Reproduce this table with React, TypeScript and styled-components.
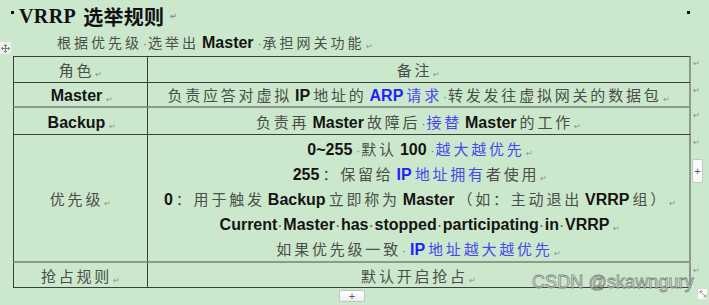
import React from "react";
import styled, { createGlobalStyle } from "styled-components";

const GlobalStyle = createGlobalStyle`
  html, body {
    margin: 0;
    padding: 0;
  }
  body {
    background: #cce8cc;
    font-family: "Liberation Sans", "Noto Sans CJK SC", sans-serif;
  }
`;

const DARK = "#3b403b";
const SOFT = "#8c9a8c";

const Page = styled.div`
  position: relative;
  width: 709px;
  height: 305px;
  overflow: hidden;
  background: #cce8cc;
`;

const Heading = styled.div`
  display: flex;
  align-items: center;
  justify-content: space-between;
  height: 32px;
  padding: 0 19px 0 11px;
  box-sizing: border-box;
`;

const Title = styled.h1`
  margin: 0;
  display: flex;
  align-items: center;
  gap: 5px;
  font: 700 20px "Liberation Serif", "Noto Sans CJK SC", serif;
  color: #111;
  letter-spacing: 0.4px;
`;

const Bullet = styled.span<{ $size: number }>`
  width: ${(p) => p.$size}px;
  height: ${(p) => p.$size}px;
  background: #111;
  margin-bottom: 8px;
`;

const Cjk = styled.span`
  font-family: "Noto Sans CJK SC", sans-serif;
  margin-left: 2px;
  letter-spacing: 0.3px;
`;

const Intro = styled.p`
  margin: 0;
  height: 24px;
  line-height: 22px;
  padding-left: 57px;
  font-size: 14px;
  letter-spacing: 3px;
  color: #4a4e4a;
`;

const Mark = styled.span`
  font-size: 8px;
  color: #8a8f8a;
  letter-spacing: 0;
  margin-left: 1px;
  vertical-align: -1px;
`;

const Dot = styled.span`
  color: #6c706c;
  letter-spacing: 0;
  font-size: 12px;
  padding: 0 1px;
`;

const B = styled.b<{ $blue?: boolean }>`
  font-family: "Liberation Sans", sans-serif;
  font-weight: 700;
  font-size: 16px;
  letter-spacing: 0;
  color: ${(p) => (p.$blue ? "#1f1fff" : "#141414")};
  padding: 0 3px;
`;

const Blue = styled.span`
  color: #4848ee;
`;

const Grid = styled.div`
  display: grid;
  grid-template-columns: 135px 543px 19px;
  margin-left: 13px;
`;

const Cell = styled.div<{ $h: number; $top?: boolean; $soft?: boolean; $multi?: boolean }>`
  box-sizing: border-box;
  height: ${(p) => p.$h}px;
  padding-top: ${(p) => (p.$multi ? 3 : 7)}px;
  border-top: ${(p) => (p.$top ? `1px solid ${DARK}` : "none")};
  border-bottom: ${(p) => (p.$soft ? `2px solid ${SOFT}` : `1px solid ${DARK}`)};
  display: flex;
  flex-direction: column;
  align-items: center;
  justify-content: center;
  font-size: 15px;
  line-height: 20px;
  letter-spacing: 2.8px;
  color: #4a4e4a;
  white-space: nowrap;
`;

const KeyCell = styled(Cell)`
  border-left: 1px solid ${DARK};
  border-right: 1px solid ${DARK};
`;

const NoteCell = styled(Cell)`
  border-right: 2px solid ${SOFT};
`;

const Line = styled.div`
  height: 25px;
  line-height: 25px;
`;

const EndCell = styled.div<{ $h: number }>`
  height: ${(p) => p.$h}px;
  padding: 3px 0 0 1px;
  box-sizing: border-box;
  display: flex;
  flex-direction: column;
  align-items: flex-start;
  gap: 12px;
`;

const EndMark = styled.span`
  font-size: 8px;
  color: #8a8f8a;
  margin-left: 1px;
`;

const SideAdd = styled.div`
  width: 11px;
  height: 24px;
  box-sizing: border-box;
  background: #fafafa;
  border: 1px solid #c4c8c4;
  border-radius: 2px;
  display: flex;
  align-items: center;
  justify-content: center;
  font-size: 11px;
  color: #555;
`;

const Footer = styled.div`
  width: 678px;
  margin-left: 13px;
  display: flex;
  justify-content: center;
  padding-top: 2px;
`;

const BottomAdd = styled.div`
  width: 26px;
  height: 12px;
  box-sizing: border-box;
  background: linear-gradient(#ffffff, #eeeeee);
  border: 1px solid #c0c4c0;
  border-radius: 2px;
  display: flex;
  align-items: center;
  justify-content: center;
  font-size: 11px;
  line-height: 1;
  color: #555;
`;

const MoveHandle = styled.div`
  position: absolute;
  left: 0;
  top: 42px;
  width: 11px;
  height: 12px;
  background: #eef0ee;
  display: flex;
  align-items: center;
  justify-content: center;
`;

const ResizeHandle = styled.div`
  position: absolute;
  left: 697px;
  top: 288px;
  width: 11px;
  height: 12px;
  background: #fbfbfb;
  border: 1px solid #d8dcd8;
  box-sizing: border-box;
  display: flex;
  align-items: center;
  justify-content: center;
`;

const Watermark = styled.div`
  position: absolute;
  left: 532px;
  top: 272px;
  font: 400 18px "Liberation Sans", sans-serif;
  color: rgba(255, 255, 255, 0.6);
  -webkit-text-stroke: 0.8px #80857f;
  letter-spacing: 0.1px;
  pointer-events: none;
`;

type Row = {
  key: React.ReactNode;
  note: React.ReactNode;
  h: number;
  soft?: boolean;
  multi?: boolean;
};

const rows: Row[] = [
  {
    key: (
      <>
        角色<Mark>↵</Mark>
      </>
    ),
    note: (
      <span>
        备注<Mark>↵</Mark>
      </span>
    ),
    h: 27,
  },
  {
    key: (
      <>
        <B>Master</B>
        <Mark>↵</Mark>
      </>
    ),
    note: (
      <span>
        负责应答对虚拟<B>IP</B>地址的<B $blue>ARP</B>
        <Blue>请求</Blue>
        <Dot>·</Dot>转发发往虚拟网关的数据包<Mark>↵</Mark>
      </span>
    ),
    h: 25,
    soft: true,
  },
  {
    key: (
      <>
        <B>Backup</B>
        <Mark>↵</Mark>
      </>
    ),
    note: (
      <span>
        负责再<B>Master</B>故障后<Dot>·</Dot>
        <Blue>接替</Blue>
        <B>Master</B>的工作<Mark>↵</Mark>
      </span>
    ),
    h: 27,
  },
  {
    key: (
      <>
        优先级<Mark>↵</Mark>
      </>
    ),
    note: (
      <>
        <Line>
          <B>0~255</B>
          <Dot>·</Dot>默认<B>100</B>
          <Dot>·</Dot>
          <Blue>越大越优先</Blue>
          <Mark>↵</Mark>
        </Line>
        <Line>
          <B>255</B>：保留给<B $blue>IP</B>
          <Blue>地址拥有</Blue>者使用<Mark>↵</Mark>
        </Line>
        <Line>
          <B>0</B>：用于触发<B>Backup</B>立即称为<B>Master</B>（如：主动退出<B>VRRP</B>组）
          <Mark>↵</Mark>
        </Line>
        <Line>
          <B>
            Current<Dot>·</Dot>Master<Dot>·</Dot>has<Dot>·</Dot>stopped<Dot>·</Dot>
            participating<Dot>·</Dot>in<Dot>·</Dot>VRRP
          </B>
          <Mark>↵</Mark>
        </Line>
        <Line>
          如果优先级一致<Dot>·</Dot>
          <B $blue>IP</B>
          <Blue>地址越大越优先</Blue>
          <Mark>↵</Mark>
        </Line>
      </>
    ),
    h: 128,
    soft: true,
    multi: true,
  },
  {
    key: (
      <>
        抢占规则<Mark>↵</Mark>
      </>
    ),
    note: (
      <span>
        默认开启抢占<Mark>↵</Mark>
      </span>
    ),
    h: 25,
  },
];

const MoveIcon = () => (
  <svg width="9" height="9" viewBox="0 0 9 9" fill="none" stroke="#7a7f7a" strokeWidth="1">
    <path d="M4.5 0.5v8M0.5 4.5h8" />
    <path d="M3 2l1.5-1.5L6 2M3 7l1.5 1.5L6 7M2 3L0.5 4.5 2 6M7 3l1.5 1.5L7 6" />
  </svg>
);

const ResizeIcon = () => (
  <svg width="8" height="8" viewBox="0 0 8 8" fill="none" stroke="#8a8f8a" strokeWidth="0.9">
    <path d="M1 1l6 6M1 1h2.5M1 1v2.5M7 7H4.5M7 7V4.5" />
  </svg>
);

const App = () => {
  return (
    <Page>
      <GlobalStyle />
      <Heading>
        <Title>
          <Bullet $size={3} />
          VRRP
          <Cjk>选举规则</Cjk>
          <Mark>↵</Mark>
        </Title>
        <Bullet $size={3} />
      </Heading>
      <Intro>
        根据优先级<Dot>·</Dot>选举出<B>Master</B>
        <Dot>·</Dot>承担网关功能<Mark>↵</Mark>
      </Intro>
      <MoveHandle>
        <MoveIcon />
      </MoveHandle>
      <Grid>
        {rows.map((row, i) => (
          <React.Fragment key={i}>
            <KeyCell $h={row.h} $top={i === 0} $soft={row.soft}>
              <span>{row.key}</span>
            </KeyCell>
            <NoteCell $h={row.h} $top={i === 0} $soft={row.soft} $multi={row.multi}>
              {row.note}
            </NoteCell>
            <EndCell $h={row.h}>
              <EndMark>↵</EndMark>
              {row.multi && <SideAdd>+</SideAdd>}
            </EndCell>
          </React.Fragment>
        ))}
      </Grid>
      <Footer>
        <BottomAdd>+</BottomAdd>
      </Footer>
      <ResizeHandle>
        <ResizeIcon />
      </ResizeHandle>
      <Watermark>CSDN @skawngury</Watermark>
    </Page>
  );
};

export default App;
